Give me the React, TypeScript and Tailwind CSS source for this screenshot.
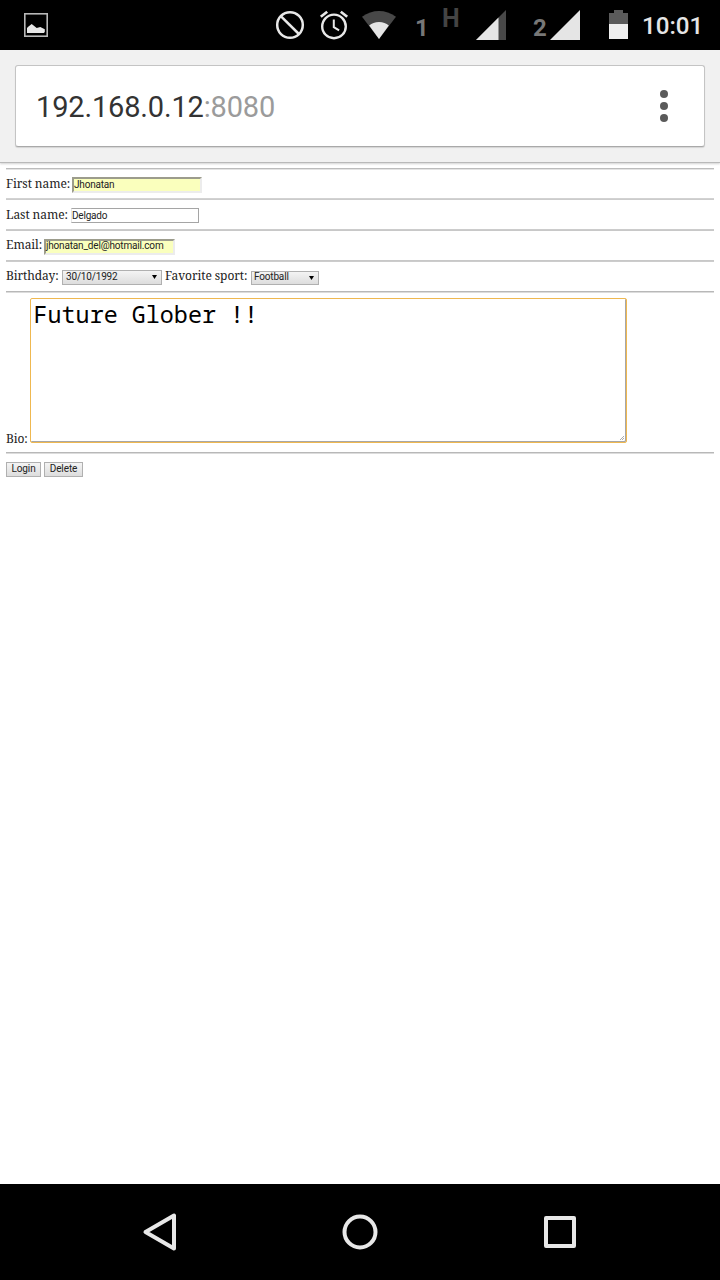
import type { ReactNode } from "react";

function Label({ children, className }: { children: ReactNode; className: string }) {
  return (
    <span className={`block h-4 shrink-0 whitespace-nowrap font-['Noto_Serif','Droid_Serif','DejaVu_Serif',serif] text-[12px] leading-4 tracking-[-0.08px] text-[#222] ${className}`}>
      {children}
    </span>
  );
}

function Rule({ className = "border-t-[#b8b8b8] border-b-[#dcdcdc]" }: { className?: string }) {
  return <div className={`h-[2px] shrink-0 border-t border-b ${className}`} />;
}

function Row({ children, className = "h-[29px]" }: { children: ReactNode; className?: string }) {
  return <div className={`flex items-start ${className}`}>{children}</div>;
}

function StatusBar() {
  return (
    <header className="flex h-[50px] shrink-0 items-start bg-black font-[Roboto,sans-serif] text-[#e5e5e5]">
      <svg className="mt-[13px] ml-6 h-6 w-6" viewBox="0 0 24 24">
        <rect x="0.8" y="0.8" width="22.4" height="22.4" fill="none" stroke="#b8b8b8" strokeWidth="1.6" />
        <path d="M3 20v-5l1.5-1.5L7.7 11l5 4.1 3.6-1.2 4.5 2.4V19l-1 1z" fill="#e8e8e8" />
      </svg>
      <svg className="mt-[10px] ml-[227px] h-[30px] w-[30px]" viewBox="0 0 30 30" fill="none" stroke="#e8e8e8" strokeWidth="2.5">
        <circle cx="15" cy="15" r="12.8" />
        <path d="M5.8 6.2 23.9 24" />
      </svg>
      <svg className="mt-[10px] ml-[14px] h-[30px] w-[30px]" viewBox="0 0 30 30" fill="none" stroke="#e8e8e8" strokeWidth="2.4">
        <circle cx="15" cy="16.4" r="11.8" />
        <path d="M1.8 6.7 8.2 1.7M28.2 6.7 21.8 1.7" strokeWidth="2.7" />
        <path d="M14.8 9.4v7.7l5.3 3.2" strokeWidth="2" />
      </svg>
      <svg className="mt-[10px] ml-[12px] h-[30px] w-[36px]" viewBox="0 0 36 30">
        <path d="M1 6.8Q9 .9 18 .9T35 6.8L18 29z" fill="#484848" />
        <path d="M8.2 15.6Q12 12 18 12T27.8 15.6L18 29z" fill="#e5e5e5" />
      </svg>
      <span className="mt-[14px] ml-[18px] w-[27px] text-[24px] leading-7 font-bold text-[#777]">1</span>
      <span className="mt-[5px] w-[35px] text-[25px] leading-7 font-bold text-[#444]">H</span>
      <svg className="mt-[10px] -ml-[1px] h-[30px] w-[30px]" viewBox="0 0 30 30">
        <path d="M0 30 30 0v30z" fill="#484848" />
        <path d="M0 30 22.5 7.5v22.5z" fill="#e5e5e5" />
      </svg>
      <span className="mt-[14px] ml-[27px] w-[17px] text-[24px] leading-7 font-bold text-[#777]">2</span>
      <svg className="mt-[10px] h-[30px] w-[30px]" viewBox="0 0 30 30">
        <path d="M0 30 30 0v30z" fill="#e5e5e5" />
      </svg>
      <svg className="mt-[10px] ml-[29px] h-[29px] w-[19px]" viewBox="0 0 19 29">
        <path d="M0 3h5V0h9v3h5v12H0z" fill="#5b5b5b" />
        <path d="M0 14h19v15H0z" fill="#efefef" />
      </svg>
      <span className="mt-[12px] ml-[14px] text-[24.2px] leading-7 font-medium">10:01</span>
    </header>
  );
}

function AddressBar() {
  return (
    <div className="h-[113px] shrink-0 border-b border-[#b9b9b9] bg-[#f1f1f1] px-[15px] pt-[15px] shadow-[0_1px_2px_rgba(0,0,0,0.18)]">
      <div className="flex h-[82px] items-center justify-between rounded-[3px] border border-[#c4c4c4] border-b-[#a9a9a9] bg-white pr-[36px] pl-5 shadow-[0_1px_1px_rgba(0,0,0,0.12)]">
        <span className="pt-[2px] font-[Roboto,sans-serif] text-[29px] leading-9 tracking-[-0.16px] text-[#333]">
          192.168.0.12<span className="text-[#9b9b9b]">:8080</span>
        </span>
        <svg className="h-8 w-2" viewBox="0 0 8 32" fill="#5a5a5a">
          <circle cx="4" cy="4" r="4" />
          <circle cx="4" cy="16" r="4" />
          <circle cx="4" cy="28" r="4" />
        </svg>
      </div>
    </div>
  );
}

function Field({ value, className }: { value: string; className: string }) {
  return (
    <div className={`whitespace-nowrap font-[Roboto,sans-serif] text-[10px] text-[#222] ${className}`}>
      {value}
    </div>
  );
}

function Select({ value, className }: { value: string; className: string }) {
  return (
    <div className={`flex items-start justify-between border border-[#b0b0b0] bg-linear-to-b from-[#f4f4f4] to-[#dddddd] pr-1 font-[Roboto,sans-serif] text-[10px] tracking-[-0.17px] text-[#222] ${className}`}>
      <span>{value}</span>
      <svg className="mt-1 h-1 w-[5px]" viewBox="0 0 5 4">
        <path d="M0 0h5L2.5 4z" fill="#000" />
      </svg>
    </div>
  );
}

function Button({ children, className }: { children: ReactNode; className: string }) {
  return (
    <button className={`flex h-[15px] items-start justify-center border border-[#b0b0b0] bg-linear-to-b from-[#f4f4f4] to-[#dddddd] font-[Roboto,sans-serif] text-[10px] leading-[12px] tracking-[-0.1px] text-[#222] ${className}`}>
      {children}
    </button>
  );
}

function Form() {
  return (
    <main className="flex-1 px-[6px] pt-[5px]">
      <Rule className="border-t-[#bcbcbc] border-b-[#e4e4e4]" />
      <Row className="h-[28px]">
        <Label className="mt-[6px] w-[64px]">First name:</Label>
        <Field value="Jhonatan" className="mt-[7px] ml-[2px] h-4 w-[130px] border-2 border-t-[#9c9c8c] border-r-[#ececec] border-b-[#ececec] border-l-[#9c9c8c] bg-[#faffbd] leading-[11px] tracking-[-0.2px]" />
      </Row>
      <Rule className="border-t-[#d2d2d2] border-b-[#cccccc]" />
      <Row>
        <Label className="mt-[7px] w-[62px]">Last name:</Label>
        <Field value="Delgado" className="mt-[8px] ml-[3px] h-[15px] w-[128px] border border-[#a5a5a5] border-l-[#e6e6e6] leading-[13px] tracking-[-0.2px]" />
      </Row>
      <Rule className="border-t-[#cccccc] border-b-[#c8c8c8]" />
      <Row>
        <Label className="mt-[6px] w-[36px]">Email:</Label>
        <Field value="jhonatan_del@hotmail.com" className="mt-[8px] ml-[2px] h-4 w-[131px] border-2 border-t-[#9c9c8c] border-r-[#ececec] border-b-[#ececec] border-l-[#9c9c8c] bg-[#faffbd] leading-[9px] tracking-[-0.17px]" />
      </Row>
      <Rule className="border-t-[#c8c8c8] border-b-[#cccccc]" />
      <Row>
        <Label className="mt-[6px] w-[53px]">Birthday:</Label>
        <Select value="30/10/1992" className="mt-[8px] ml-[3px] h-[15px] w-[100px] pl-[3px] leading-[11px]" />
        <Label className="mt-[6px] ml-[3px] w-[83px]">Favorite sport:</Label>
        <Select value="Football" className="mt-[9px] ml-[3px] h-[14px] w-[68px] pl-[2px] leading-[9px]" />
      </Row>
      <Rule />
      <div className="flex h-[159px] items-start">
        <Label className="mt-[138px] w-[22px]">Bio:</Label>
        <div className="mt-[5px] ml-[2px] flex h-[145px] w-[597px] items-start justify-between rounded-[2px] border border-[#efb850] pt-[1px] pr-[2px] pb-[2px] pl-[2.5px] shadow-[inset_-1px_-1px_0_#a7a7a7]">
          <span className="font-['Droid_Sans_Mono','Noto_Sans_Mono','DejaVu_Sans_Mono',monospace] text-[23.4px] leading-[28px] text-black">Future Glober !!</span>
          <svg className="mt-auto h-1 w-1" viewBox="0 0 4 4">
            <path d="M0 4 4 0M2 4 4 2" stroke="#888" strokeWidth=".7" />
          </svg>
        </div>
      </div>
      <Rule />
      <div className="flex gap-[3px] pt-[8px]">
        <Button className="w-[35px]">Login</Button>
        <Button className="w-[39px]">Delete</Button>
      </div>
    </main>
  );
}

function NavigationBar() {
  return (
    <nav className="flex h-24 shrink-0 items-center justify-between bg-black px-[140px]">
      <svg className="h-10 w-10" viewBox="0 0 40 40" fill="none" stroke="#e8e8e8" strokeWidth="4" strokeLinejoin="round">
        <path d="M34 3.5v33L5.5 20z" />
      </svg>
      <svg className="h-10 w-10" viewBox="0 0 40 40" fill="none" stroke="#e8e8e8" strokeWidth="4">
        <circle cx="20" cy="20" r="15.5" />
      </svg>
      <svg className="h-10 w-10" viewBox="0 0 40 40" fill="none" stroke="#e8e8e8" strokeWidth="4" strokeLinejoin="round">
        <path d="M6 6h28v28H6z" />
      </svg>
    </nav>
  );
}

export default function App() {
  return (
    <div className="flex h-[1280px] w-[720px] flex-col overflow-hidden bg-white">
      <StatusBar />
      <AddressBar />
      <Form />
      <NavigationBar />
    </div>
  );
}
